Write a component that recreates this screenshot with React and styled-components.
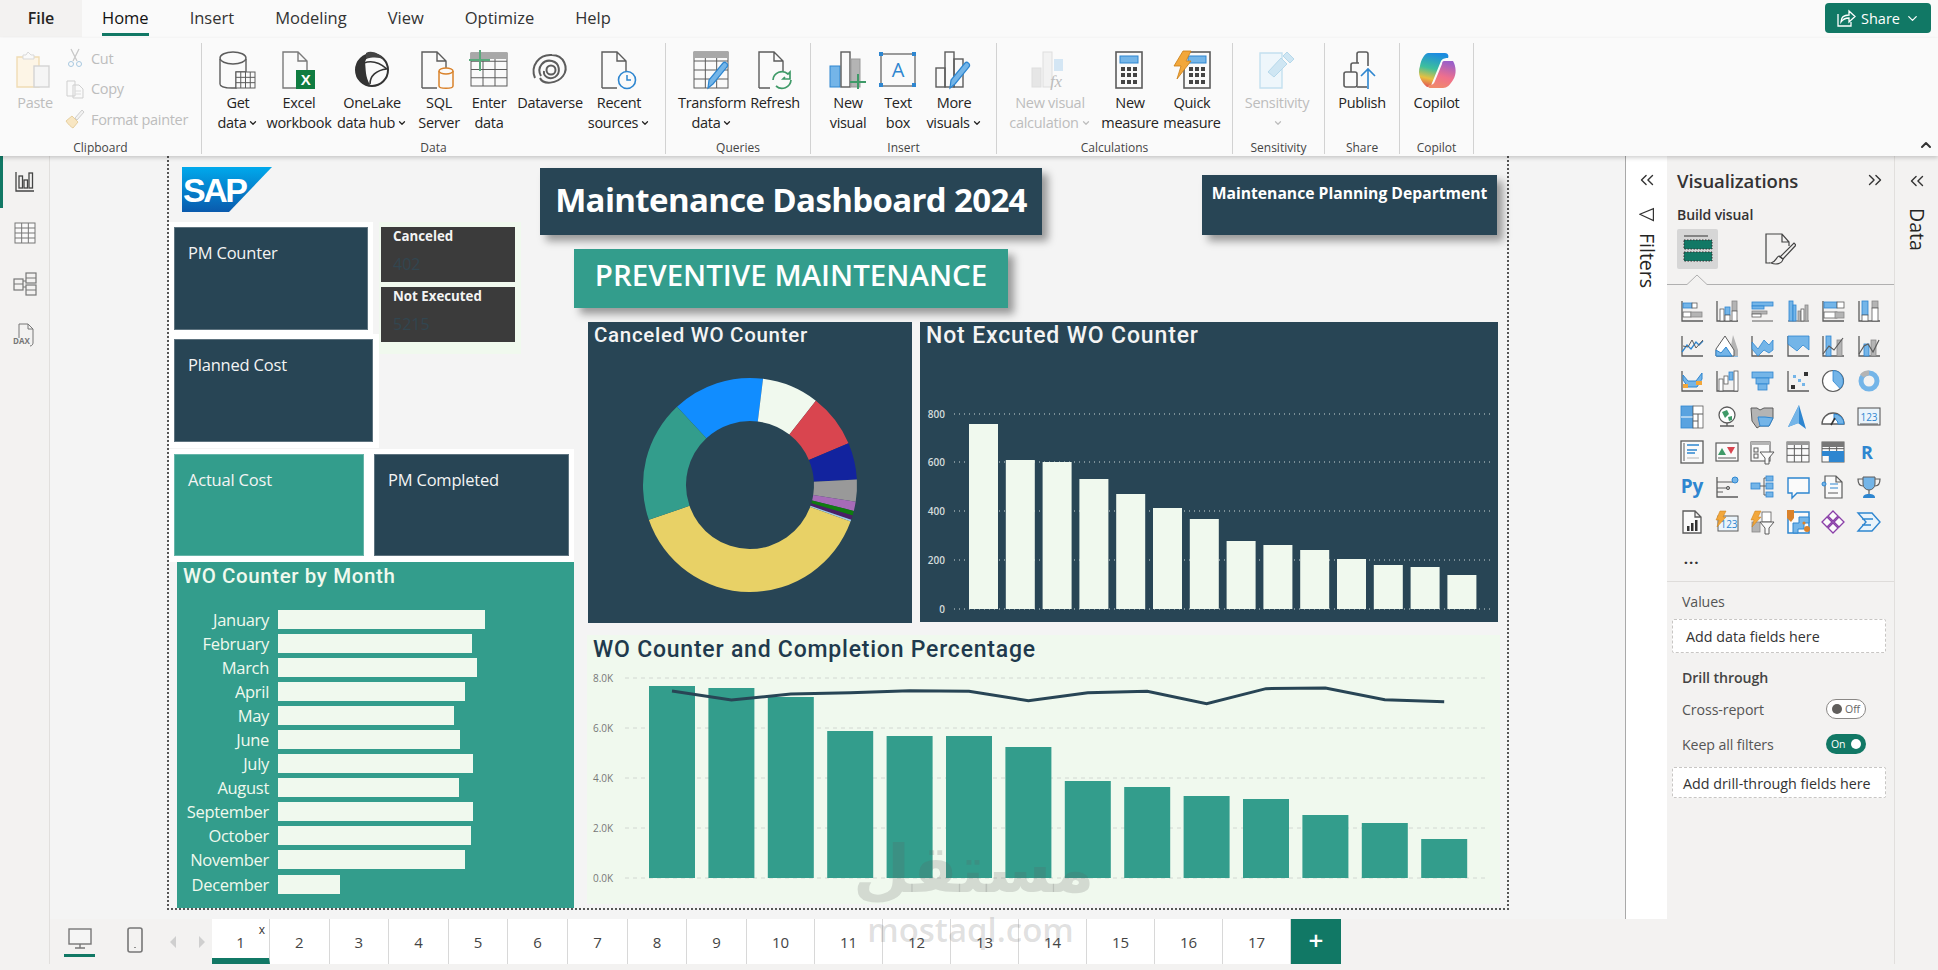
import React from 'react';
import styled, { createGlobalStyle } from 'styled-components';
import { ChevronDown, ChevronUp, ChevronsLeft, ChevronsRight } from 'lucide-react';

const DARK = '#284555';
const TEAL = '#339d8c';
const MINT = '#f0f9ee';
const GREEN = '#117865';
const PANE = '#f3f2f1';

const GlobalStyle = createGlobalStyle`
  html, body { margin: 0; padding: 0; background: ${PANE}; }
  body { font-family: "Open Sans", "Liberation Sans", sans-serif; color: #252423; }
`;

/* ---------- ribbon icons ---------- */
const Ico = styled.svg.attrs({ viewBox: '0 0 40 40', fill: 'none' })`
  width: 40px;
  height: 40px;
  display: block;
`;
const Mini = styled.svg.attrs({ viewBox: '0 0 20 20', fill: 'none' })`
  width: 20px;
  height: 20px;
  display: block;
  flex: none;
`;
const Gal = styled.svg.attrs({ viewBox: '0 0 24 24', fill: 'none' })`
  width: 24px;
  height: 24px;
  display: block;
  overflow: visible;
`;
const ink = '#5c5c5c';
const blue = '#2e86d0';
const sky = '#74b5e8';
const grey = '#b4b4b4';

const Grid = ({ x, y, w, h, cols = 3, rows = 3, s = ink }) => (
  <g stroke={s} strokeWidth="1">
    <rect x={x} y={y} width={w} height={h} fill="#fafafa" />
    {Array.from({ length: cols - 1 }, (_, i) => (
      <line key={i} x1={x + ((i + 1) * w) / cols} x2={x + ((i + 1) * w) / cols} y1={y} y2={y + h} />
    ))}
    {Array.from({ length: rows - 1 }, (_, i) => (
      <line key={i} y1={y + ((i + 1) * h) / rows} y2={y + ((i + 1) * h) / rows} x1={x} x2={x + w} />
    ))}
  </g>
);
const Pencil = () => (
  <path d="M16 38l1-8L31 13c2-2 6 1 4 4L21 34z" fill={sky} stroke={blue} strokeWidth="1.2" />
);

const PasteIcon = () => (
  <Ico>
    <path d="M2 7h22v30H2z" fill="#fdf5e6" stroke="#f0dcb4" strokeWidth="1.4" />
    <path d="M8 9V5h3l2-3 3 3h3v4z" fill="#fafafa" stroke="#d9d9d9" />
    <rect x="19" y="16" width="15" height="21" fill="#f5f5f5" stroke="#d4d4d4" strokeWidth="1.4" />
  </Ico>
);
const CutIcon = () => (
  <Mini>
    <path d="M6 1l6 12M14 1L8 13" stroke="#c8c8c8" strokeWidth="1.3" />
    <circle cx="6" cy="16" r="2.5" stroke="#a8c8e0" />
    <circle cx="14" cy="16" r="2.5" stroke="#a8c8e0" />
  </Mini>
);
const CopyIcon = () => (
  <Mini>
    <path d="M2 2h8v15H2z M8 6h6l4 4v9H8z" stroke="#cfcfcf" fill="#fafafa" />
    <path d="M10 12h6M10 15h6" stroke="#dcdcdc" />
  </Mini>
);
const PainterIcon = () => (
  <Mini>
    <path d="M1 12l6-5 6 6-5 6c-2-1-5-4-7-7z" fill="#f8e6c2" stroke="#e6cf9f" />
    <path d="M10 9l7-8 2 2-7 8z" fill="#f2f2f2" stroke="#cfcfcf" />
  </Mini>
);
const GetDataIcon = () => (
  <Ico>
    <path d="M2 9v25c0 3 7 4 12 4h4V22h10V9" stroke={ink} strokeWidth="1.4" />
    <ellipse cx="15" cy="8" rx="13" ry="6" stroke={ink} strokeWidth="1.4" fill="#fafafa" />
    <Grid x={18} y={22} w={19} h={16} cols={4} rows={3} />
  </Ico>
);
const ExcelIcon = () => (
  <Ico>
    <path d="M4 38V2h15l9 9v27z M19 2v9h9" stroke="#7a7a7a" strokeWidth="1.4" fill="#fafafa" />
    <rect x="17" y="20" width="19" height="19" fill="#107c41" />
    <text x="26.5" y="35" fontSize="15" fontWeight="700" fill="#fff" textAnchor="middle" fontFamily="Liberation Sans, sans-serif">X</text>
  </Ico>
);
const OneLakeIcon = () => (
  <Ico>
    <circle cx="20" cy="20" r="16" fill="#fafafa" stroke="#333" strokeWidth="2" />
    <path d="M5 26C2 14 10 4 20 3c-3 3-6 5-7 9 1 8 0 14 5 23-6 0-11-3-13-9z" fill="#333" />
    <path d="M12 13c8-3 16 0 23 6M18 34c0-8 6-14 17-15" stroke="#333" strokeWidth="1.6" />
    <path d="M14 3c5-3 14 0 18 7-5-3-11-3-18-1z" fill="#444" />
  </Ico>
);
const SqlIcon = () => (
  <Ico>
    <path d="M3 38V2h15l9 9v16 M18 2v9h9 M3 38h15" stroke={ink} strokeWidth="1.4" fill="#fafafa" />
    <path d="M20 21v15c0 3 14 3 14 0V21" fill="#fafafa" stroke="#d9822b" strokeWidth="1.5" />
    <ellipse cx="27" cy="21" rx="7" ry="3" fill="#fafafa" stroke="#d9822b" strokeWidth="1.5" />
  </Ico>
);
const EnterIcon = () => (
  <Ico>
    <Grid x={2} y={3} w={36} h={33} cols={3} rows={4} />
    <rect x="2" y="3" width="36" height="6" fill="#a8a8a8" />
    <path d="M11 0v21M0 10h21" stroke="#5aa97c" strokeWidth="2" />
  </Ico>
);
const DataverseIcon = () => (
  <Ico>
    <path d="M5 28C0 16 9 4 22 5c12 0 17 13 11 21-6 8-20 9-23 2" stroke={ink} strokeWidth="2" />
    <path d="M11 26C6 17 14 9 22 11c8 2 9 12 3 16-5 3-12 0-11-6" stroke={ink} strokeWidth="2" />
    <circle cx="21" cy="20" r="4.5" stroke={ink} strokeWidth="2" />
  </Ico>
);
const RecentIcon = () => (
  <Ico>
    <path d="M3 38V2h15l9 9v13 M18 2v9h9 M3 38h15" stroke={ink} strokeWidth="1.4" />
    <circle cx="28" cy="30" r="8.5" stroke={blue} strokeWidth="1.6" fill="#fafafa" />
    <path d="M28 25v5h4" stroke={blue} strokeWidth="1.5" />
  </Ico>
);
const TransformIcon = () => (
  <Ico>
    <Grid x={2} y={2} w={34} h={36} cols={3} rows={4} />
    <rect x="2" y="2" width="34" height="6" fill="#a8a8a8" />
    <Pencil />
  </Ico>
);
const RefreshIcon = () => (
  <Ico>
    <path d="M4 38V2h15l9 9v10 M19 2v9h9 M4 38h11" stroke={ink} strokeWidth="1.4" />
    <path d="M18 30a9 9 0 0 1 15-6l2-2v7h-7l2-2M36 30a9 9 0 0 1-15 6" stroke="#3f9a68" strokeWidth="1.7" />
  </Ico>
);
const NewVisualIcon = () => (
  <Ico>
    <rect x="2" y="16" width="10" height="21" fill={sky} stroke={blue} />
    <rect x="13" y="2" width="9" height="35" fill="#fafafa" stroke={ink} strokeWidth="1.4" />
    <rect x="23" y="9" width="9" height="28" fill={grey} stroke="#999" />
    <path d="M30 24v15M22 32h16" stroke="#3f9a68" strokeWidth="2" />
  </Ico>
);
const TextBoxIcon = () => (
  <Ico>
    <rect x="3" y="4" width="34" height="32" fill="#fafafa" stroke={ink} strokeWidth="1.2" />
    {[[1, 2], [34, 2], [1, 33], [34, 33]].map(([x, y]) => (
      <rect key={x + '' + y} x={x} y={y} width="4" height="4" fill={blue} />
    ))}
    <text x="20" y="27" fontSize="20" fill={blue} textAnchor="middle" fontFamily="Open Sans, sans-serif">A</text>
  </Ico>
);
const MoreVisualsIcon = () => (
  <Ico>
    <rect x="2" y="18" width="9" height="19" stroke={ink} strokeWidth="1.4" />
    <rect x="11" y="2" width="9" height="35" stroke={ink} strokeWidth="1.4" />
    <rect x="20" y="9" width="9" height="28" stroke={ink} strokeWidth="1.4" />
    <Pencil />
  </Ico>
);
const VisualCalcIcon = () => (
  <Ico>
    <rect x="2" y="18" width="9" height="19" fill="#e6e6e6" stroke="#dedede" />
    <rect x="13" y="2" width="9" height="35" fill="#f2f2f2" stroke="#dedede" />
    <rect x="24" y="9" width="9" height="12" fill="#d4e6f4" />
    <text x="20" y="37" fontSize="17" fontStyle="italic" fill="#bdbdbd" fontFamily="Liberation Serif, serif">fx</text>
  </Ico>
);
const Calc = ({ x = 0 }) => (
  <g transform={`translate(${x} 0)`}>
    <rect x="6" y="2" width="26" height="36" fill="#fafafa" stroke={ink} strokeWidth="1.6" />
    <rect x="10" y="6" width="18" height="7" fill={sky} stroke={blue} />
    {[17, 23, 30].map(y => [11, 17, 23].map(cx => (
      <rect key={y + '-' + cx} x={cx} y={y} width="4" height="4" fill="#444" />
    )))}
  </g>
);
const MeasureIcon = () => <Ico><Calc /></Ico>;
const QuickIcon = () => (
  <Ico>
    <Calc x={6} />
    <path d="M11 1h8l-5 10h5L5 29l4-13H2z" fill="#f2a73b" stroke="#c97c14" strokeWidth=".8" />
  </Ico>
);
const SensitivityIcon = () => (
  <Ico>
    <path d="M3 3h22v35H3z" fill="#eef6fb" stroke="#c4e0ef" strokeWidth="1.4" />
    <path d="M11 22L24 8l6 6-13 13z" fill="#cfe6f3" stroke="#b6d8ea" />
    <path d="M26 6l4-4 7 7-4 4z" fill="#cfe6f3" stroke="#b6d8ea" />
  </Ico>
);
const PublishIcon = () => (
  <Ico>
    <rect x="2" y="22" width="13" height="15" rx="2" stroke={ink} strokeWidth="1.6" />
    <path d="M9 22v-7a2 2 0 0 1 2-2h6" stroke={ink} strokeWidth="1.6" />
    <path d="M15 13V4a2 2 0 0 1 2-2h7a2 2 0 0 1 2 2v12" stroke={ink} strokeWidth="1.6" />
    <path d="M15 37h10" stroke={ink} strokeWidth="1.6" />
    <path d="M26 39V19M19 26l7-7 7 7" stroke={blue} strokeWidth="1.6" />
  </Ico>
);
const CopilotIcon = () => (
  <Ico>
    <defs>
      <linearGradient id="cpA" x1="0.5" y1="0" x2="0.3" y2="1">
        <stop offset="0" stopColor="#1b8be0" />
        <stop offset=".45" stopColor="#3ebf9c" />
        <stop offset=".75" stopColor="#e8c040" />
        <stop offset="1" stopColor="#e25555" />
      </linearGradient>
      <linearGradient id="cpB" x1="0.6" y1="0" x2="0.3" y2="1">
        <stop offset="0" stopColor="#9a5fc8" />
        <stop offset=".55" stopColor="#f0708c" />
        <stop offset="1" stopColor="#f08a6a" />
      </linearGradient>
    </defs>
    <path d="M11 3h17c3 0 4 3 3 5-2 0-5 0-7 3L15 33c-1 3-2 4-5 4C4 32 0 24 3 16 4 10 7 4 11 3z" fill="url(#cpA)" />
    <path d="M27 11h9c3 5 4 13 0 19-3 5-6 8-10 8H13c-2 0-2-2-1-3 3 0 5-1 6-4l7-17c0-2 1-3 2-3z" fill="url(#cpB)" />
  </Ico>
);

/* ---------- gallery icons, one per cell ---------- */
const base = <path d="M2 2v20h21" stroke={ink} strokeWidth="1.3" />;
const F = ({ x, y, w, h, c = sky, s = blue }) => <rect x={x} y={y} width={w} height={h} fill={c} stroke={s} strokeWidth=".8" />;
const G = props => <F c={grey} s="#888" {...props} />;
const W = props => <F c="#fff" s={ink} {...props} />;
const T = ({ x = 12, y = 17, size = 11, c = blue, children, weight = 400 }) => (
  <text x={x} y={y} fontSize={size} fill={c} fontWeight={weight} textAnchor="middle" fontFamily="Open Sans, sans-serif">{children}</text>
);
const Bolt = () => <path d="M5 1h6L8 7h3L2 17l2-7H1z" fill="#f2a73b" stroke="#c97c14" strokeWidth=".5" />;

const galleryIcons = [
  <>{base}<F x={3} y={4} w={9} h={5} /><W x={12} y={4} w={5} h={5} /><W x={3} y={13} w={8} h={5} /><G x={11} y={13} w={11} h={5} /></>,
  <>{base}<W x={5} y={10} w={4} h={12} /><F x={10} y={8} w={5} h={8} /><W x={10} y={16} w={5} h={6} /><G x={17} y={2} w={5} h={10} /><W x={17} y={12} w={5} h={10} /></>,
  <><path d="M2 22h21" stroke={ink} /><F x={2} y={3} w={21} h={4} /><F x={2} y={7} w={12} h={3} /><G x={2} y={12} w={15} h={3} /><W x={2} y={15} w={9} h={3} /></>,
  <><path d="M2 22h21" stroke={ink} /><F x={3} y={2} w={4} h={20} /><F x={7} y={6} w={3} h={16} /><G x={12} y={12} w={3} h={10} /><W x={15} y={10} w={3} h={12} /><G x={19} y={6} w={3} h={16} /></>,
  <>{base}<F x={3} y={3} w={13} h={6} /><W x={16} y={3} w={7} h={6} /><W x={3} y={13} w={13} h={6} /><G x={14} y={13} w={9} h={6} /></>,
  <>{base}<F x={5} y={2} w={6} h={14} /><W x={5} y={16} w={6} h={6} /><G x={15} y={2} w={6} h={7} /><W x={15} y={9} w={6} h={13} /></>,
  <>{base}<path d="M2 18l5-7 4 4 5-7 3 3 4-4" stroke={blue} strokeWidth="1.3" /><path d="M3 12l5 1 4-7 4 8 7-8" stroke={ink} /></>,
  <><path d="M2 22h21" stroke={blue} /><path d="M14 22L18 1l5 15v6z" fill={grey} /><path d="M1 22V15L10 2l9 14v6z" fill="#fff" stroke={ink} /><path d="M1 22v-6l5 3 5-6 6 9z" fill={sky} stroke={blue} /></>,
  <>{base}<path d="M2 8l6 7 6-9 5 5 4-5v10l-4 3-5-3-6 6-6-7z" fill={sky} stroke={blue} strokeWidth=".8" /></>,
  <>{base}<path d="M2 2h21v14l-6-5-6 6-9-7z" fill={sky} stroke={blue} strokeWidth=".8" /></>,
  <>{base}<F x={5} y={2} w={5} h={20} /><G x={16} y={6} w={5} h={16} /><path d="M2 20l6-8 5 4 9-12" stroke={ink} strokeWidth="1.2" /></>,
  <>{base}<F x={7} y={10} w={5} h={12} /><G x={14} y={6} w={5} h={16} /><path d="M2 20l5-8 4-2 5 8 6-12" stroke={ink} strokeWidth="1.2" /></>,
  <>{base}<path d="M3 6l5 6h8l6-8v6l-5 8H8l-5-7z" fill={sky} stroke={blue} /><rect x="3" y="15" width="5" height="4" fill="#f2a73b" /><rect x="16" y="12" width="6" height="4" fill="#f2a73b" /></>,
  <>{base}<W x={4} y={10} w={4} h={12} /><W x={9} y={7} w={4} h={8} /><F x={14} y={3} w={4} h={8} /><W x={19} y={2} w={4} h={20} /></>,
  <><F x={2} y={3} w={21} h={6} /><F x={6} y={9} w={13} h={6} /><F x={8} y={15} w={9} h={6} /></>,
  <>{base}<rect x="5" y="16" width="4" height="4" fill="#333" /><rect x="18" y="3" width="4" height="4" fill="#333" /><rect x="7" y="6" width="3" height="3" fill={sky} /><rect x="12" y="10" width="3" height="3" fill={sky} /><rect x="16" y="14" width="3" height="3" fill={sky} /></>,
  <><circle cx="12" cy="12" r="10.5" fill="#fff" stroke={ink} strokeWidth="1.2" /><path d="M12 12V1.5a10.5 10.5 0 0 1 7 18z" fill={sky} stroke={blue} strokeWidth=".8" /></>,
  <><circle cx="12" cy="12" r="8" stroke={sky} strokeWidth="5" /><path d="M5 7a8 8 0 0 1 7-3" stroke={grey} strokeWidth="5" /></>,
  <><F x={1} y={1} w={12} h={22} c="#5aa3e0" /><path d="M1 12h12" stroke="#fff" /><W x={13} y={1} w={10} h={22} /><path d="M13 9h10M18 9v14M13 16h5" stroke={ink} /></>,
  <><circle cx="12" cy="10" r="8" fill="#fff" stroke={ink} strokeWidth="1.3" /><path d="M7 7l5-2 2 4-4 4zM13 12l4-1 0 4-3 1z" fill="#3f9a68" /><path d="M5 21h14M12 18v3" stroke={ink} strokeWidth="1.3" /></>,
  <><path d="M1 3h6l3 2 4-2h9v10l-4 8H10l-3 2-5-7z" fill={grey} stroke={ink} /><path d="M8 12h7l8 1-4 8H10z" fill={sky} stroke={blue} /></>,
  <><path d="M13 0l7 24-8-6-10 4z" fill={blue} /><path d="M13 0v18l-11 4z" fill={sky} /></>,
  <><path d="M1 19a11 11 0 0 1 22 0z" fill="#fff" stroke={ink} strokeWidth="1.3" /><path d="M13 9a10 10 0 0 1 10 10h-6a5 5 0 0 0-4-5z" fill={sky} stroke={blue} /><path d="M10 20l4-7" stroke="#333" strokeWidth="1.6" /></>,
  <><rect x="1" y="3" width="22" height="17" fill="#eaf4fb" stroke={ink} strokeWidth="1.1" /><T size={10} y={16}>123</T><path d="M3 19h18" stroke={ink} /></>,
  <><rect x="1" y="1" width="22" height="22" fill="#fafafa" stroke={ink} strokeWidth="1.3" /><path d="M4 3v18" stroke={ink} /><path d="M7 5h12M7 10h10M7 13h8" stroke={blue} strokeWidth="1.7" /><path d="M7 18h12" stroke={grey} /></>,
  <><rect x="1" y="3" width="22" height="18" fill="#fafafa" stroke={ink} strokeWidth="1.2" /><path d="M7 8l4 7H3z" fill="#3f9a68" /><path d="M12 7h8l-4 7z" fill="#d9444f" /><path d="M3 18h18" stroke={ink} /></>,
  <><rect x="1" y="2" width="19" height="19" fill="#fafafa" stroke={ink} strokeWidth="1.1" /><rect x="1" y="2" width="19" height="3" fill={grey} /><rect x="4" y="8" width="4" height="4" stroke={ink} /><rect x="4" y="14" width="4" height="4" stroke={ink} /><path d="M10 12h14l-5 6v6h-4v-6z" fill="#fafafa" stroke={ink} /></>,
  <><Grid x={1} y={2} w={22} h={20} cols={3} rows={3} /><rect x="1" y="2" width="22" height="3" fill="#999" /></>,
  <><Grid x={1} y={2} w={22} h={20} cols={3} rows={3} /><rect x="1" y="2" width="22" height="5" fill="#777" /><rect x="1" y="11" width="22" height="5" fill={blue} /><rect x="8" y="16" width="15" height="6" fill={blue} /></>,
  <T size={18} y={19} weight={700} x={10} c={blue}>R</T>,
  <T size={19} y={18} weight={700} c={blue}>Py</T>,
  <>{base}<path d="M2 7h16M2 13h10M2 17h6" stroke={ink} /><circle cx="20" cy="5" r="3" fill={sky} stroke={blue} /><circle cx="13" cy="13" r="1.6" fill={grey} stroke={ink} /></>,
  <><F x={1} y={8} w={9} h={6} /><path d="M10 11h4M14 3v17M14 3h2M14 11h2M14 20h2" stroke={ink} /><F x={16} y={1} w={7} h={5} /><F x={16} y={8} w={7} h={6} /><F x={16} y={17} w={7} h={5} /></>,
  <path d="M2 3h21v15H11l-5 5v-5H2z" fill="#fafafa" stroke={blue} strokeWidth="1.4" />,
  <><path d="M4 23V1h11l6 6v16z M15 1v6h6" fill="#fafafa" stroke={ink} strokeWidth="1.2" /><circle cx="3" cy="9" r="2" fill={sky} stroke={blue} /><path d="M9 9h8M9 13h8" stroke={blue} /><path d="M7 18h10" stroke={ink} /></>,
  <><path d="M6 2h12v7a6 6 0 0 1-12 0z" fill={sky} stroke={ink} /><path d="M6 4H1c0 5 2 7 5 7M18 4h5c0 5-2 7-5 7M12 15v4" stroke={ink} strokeWidth="1.2" /><path d="M6 23c0-3 2-4 6-4s6 1 6 4z" fill={blue} /></>,
  <><path d="M3 23V1h12l6 6v16z M15 1v6h6" fill="#fafafa" stroke={ink} strokeWidth="1.3" /><rect x="7" y="16" width="2.5" height="5" fill="#333" /><rect x="11" y="13" width="2.5" height="8" fill="#333" /><rect x="15" y="10" width="2.5" height="11" fill="#333" /></>,
  <><rect x="3" y="6" width="20" height="15" fill="#eaf4fb" stroke={ink} /><T x={14} y={18} size={10}>123</T><Bolt /></>,
  <><G x={2} y={12} w={8} h={10} /><W x={12} y={2} w={9} h={10} /><path d="M10 12h14l-5 6v6h-4v-6z" fill="#fafafa" stroke={ink} /><Bolt /></>,
  <><path d="M2 2h21v21H2z" fill="#fafafa" stroke={blue} strokeWidth="1.5" /><path d="M7 23V13h6V7h10v6h-5v6h-6v4z" fill={sky} stroke={blue} /><path d="M1 0h7v8l-3 4-4-4z" fill="#d9822b" /><circle cx="21" cy="19" r="3" fill="#d9822b" /><circle cx="18" cy="13" r="1.6" fill="#d9822b" /></>,
  <path d="M12 1l5 5-5 5-5-5zM6 7l5 5-5 5-5-5zM18 7l5 5-5 5-5-5zM12 13l5 5-5 5-5-5z" stroke="#8a3fa8" strokeWidth="1.3" fill="#fafafa" />,
  <path d="M1 3h14l8 9-8 9H1l8-9zM5 9h11M5 15h9" stroke={blue} strokeWidth="1.4" fill="#eaf4fb" />,
];

/* ---------- shell ---------- */
const Page = styled.div`
  position: relative;
  width: 1938px;
  height: 970px;
  overflow: hidden;
  background: ${PANE};
`;
const TopBar = styled.div`
  position: relative;
  height: 38px;
  background: #fafafa;
  display: flex;
  align-items: flex-start;
`;
const FileTab = styled.div`
  width: 82px;
  height: 37px;
  background: ${PANE};
  font-size: 16px;
  font-weight: 600;
  line-height: 36px;
  text-align: center;
`;
const Tabs = styled.div`
  display: flex;
  gap: 41px;
  margin-left: 20px;
`;
const Tab = styled.div`
  height: 33px;
  line-height: 36px;
  font-size: 16.5px;
  color: ${p => (p.$active ? '#111' : '#333')};
  border-bottom: ${p => (p.$active ? `3px solid ${GREEN}` : '3px solid transparent')};
`;
const ShareBtn = styled.div`
  position: absolute;
  left: 1825px;
  top: 3px;
  width: 106px;
  height: 30px;
  border-radius: 4px;
  background: ${GREEN};
  color: #fff;
  font-size: 14.5px;
  display: flex;
  align-items: center;
  justify-content: center;
  gap: 5px;
`;
const RibbonBar = styled.div`
  position: relative;
  z-index: 5;
  height: 118px;
  padding-top: 5px;
  box-sizing: border-box;
  background: #fafafa;
  box-shadow: 0 2px 4px rgba(0, 0, 0, 0.18);
  display: flex;
`;
const Group = styled.div`
  width: ${p => p.$w}px;
  height: 111px;
  box-sizing: border-box;
  border-right: 1px solid #d2d2d2;
  display: flex;
  flex-direction: column;
  flex: none;
`;
const GroupBody = styled.div`
  height: 93px;
  flex: none;
  display: flex;
  padding-left: ${p => p.$pad || 0}px;
`;
const GroupLabel = styled.div`
  line-height: 24px;
  font-size: 12px;
  color: #444;
  text-align: center;
`;
const RibbonBtn = styled.div`
  width: ${p => p.$w}px;
  flex: none;
  padding-top: 7px;
  display: flex;
  flex-direction: column;
  align-items: center;
  font-size: 14.5px;
  line-height: 20px;
  letter-spacing: -0.3px;
  color: ${p => (p.$off ? '#bdbdbd' : '#252423')};
  white-space: nowrap;
  text-align: center;
`;
const BtnText = styled.div`
  margin-top: 3px;
`;
const SmallCol = styled.div`
  display: flex;
  flex-direction: column;
  margin-left: 2px;
`;
const SmallBtn = styled.div`
  height: 30.5px;
  display: flex;
  align-items: center;
  gap: 6px;
  font-size: 14.5px;
  letter-spacing: -0.3px;
  color: #bdbdbd;
  white-space: nowrap;
`;
const Collapse = styled.div`
  position: absolute;
  left: 1918px;
  top: 98px;
  color: #333;
`;
const Workspace = styled.div`
  display: flex;
  height: 808px;
`;
const LeftNav = styled.div`
  position: relative;
  width: 50px;
  flex: none;
  box-sizing: border-box;
  border-right: 1px solid #e1dfdd;
  display: flex;
  flex-direction: column;
  align-items: center;
  padding-top: 14px;
  gap: 27px;
  &::before {
    content: '';
    position: absolute;
    left: 0;
    top: 0;
    width: 3px;
    height: 52px;
    background: ${GREEN};
  }
`;
const Center = styled.div`
  width: 1617px;
  flex: none;
  display: flex;
  flex-direction: column;
`;
const UpperRow = styled.div`
  flex: 1;
  display: flex;
  min-height: 0;
`;
const CanvasArea = styled.div`
  flex: 1;
  background: #f4f4f4;
  padding-left: 117px;
`;
const Canvas = styled.div`
  position: relative;
  width: 1342px;
  height: 754px;
  box-sizing: border-box;
  border: 2px dotted #555;
  border-top: 0;
  background: #f4f4f4;
`;
const FilterStrip = styled.div`
  width: 42px;
  flex: none;
  box-sizing: border-box;
  background: #fff;
  border-left: 1px solid #a9a9a9;
  display: flex;
  flex-direction: column;
  align-items: center;
  padding-top: 13px;
  color: #333;
`;
const VerticalText = styled.div`
  writing-mode: vertical-rl;
  font-size: 19.5px;
  line-height: 24px;
  font-weight: 500;
  margin-top: ${p => p.$top}px;
  color: #252423;
`;

/* ---------- canvas visuals, placed freely like on a report page ---------- */
const Visual = styled.div`
  position: absolute;
  left: ${p => p.$x - 169}px;
  top: ${p => p.$y - 156}px;
  width: ${p => p.$w}px;
  height: ${p => p.$h}px;
  box-sizing: border-box;
  background: ${p => p.$bg || DARK};
  color: ${p => p.$color || '#f4f4f4'};
  box-shadow: ${p => (p.$shadow ? '6px 6px 8px rgba(0,0,0,0.38)' : 'none')};
`;
const CardLabel = styled.div`
  font-size: 16.5px;
  line-height: 20px;
  padding: 15px 0 0 13px;
  letter-spacing: -0.2px;
  border: 1px solid rgba(255, 255, 255, 0.25);
  height: 100%;
  box-sizing: border-box;
`;
const MiniTitle = styled.div`
  font-size: 13.3px;
  font-weight: 700;
  line-height: 16px;
  padding: 1px 0 0 12px;
`;
const MiniValue = styled.div`
  font-size: 16px;
  line-height: 20px;
  padding: 10px 0 0 12px;
  color: #324650;
`;
const Headline = styled.div`
  height: 100%;
  display: flex;
  align-items: ${p => (p.$top ? 'flex-start' : 'center')};
  justify-content: center;
  color: #fff;
  font-weight: ${p => p.$weight || 700};
  font-size: ${p => p.$size}px;
  letter-spacing: ${p => p.$spacing || 0}px;
  padding-top: ${p => p.$top || 0}px;
  box-sizing: border-box;
  white-space: nowrap;
`;
const ChartTitle = styled.div`
  height: 30px;
  line-height: ${p => p.$line || 26}px;
  padding-left: ${p => p.$pad}px;
  font-family: Roboto, "Open Sans", sans-serif;
  font-size: ${p => p.$size || 20.5}px;
  font-weight: 500;
  letter-spacing: ${p => p.$spacing}px;
  white-space: nowrap;
`;
const ChartSvg = styled.svg`
  display: block;
  font-family: "Open Sans", sans-serif;
`;
const MonthList = styled.div`
  margin-top: 15px;
`;
const MonthRow = styled.div`
  height: 24.1px;
  display: flex;
  align-items: center;
`;
const MonthName = styled.div`
  width: 92px;
  text-align: right;
  font-size: 16.5px;
  letter-spacing: -0.3px;
  color: ${MINT};
  flex: none;
  white-space: nowrap;
`;
const MonthBar = styled.div`
  height: 19px;
  margin-left: 9px;
  background: ${MINT};
`;
const Watermark = styled.div`
  position: absolute;
  z-index: 8;
  left: 853px;
  top: 828px;
  width: 235px;
  text-align: center;
  color: rgba(95, 95, 95, 0.2);
  pointer-events: none;
`;
const WatermarkArabic = styled.div`
  font-family: "DejaVu Sans", sans-serif;
  font-weight: 700;
  font-size: 66px;
  line-height: 84px;
`;
const WatermarkLatin = styled.div`
  font-size: 33px;
  line-height: 36px;
  font-weight: 600;
`;

/* ---------- page tabs ---------- */
const TabsBar = styled.div`
  height: 45px;
  display: flex;
  background: ${PANE};
`;
const ViewIcons = styled.div`
  width: 162px;
  flex: none;
  display: flex;
  align-items: center;
  padding-left: 14px;
  box-sizing: border-box;
`;
const ViewSlot = styled.div`
  width: 31px;
  height: 30px;
  margin-left: ${p => p.$left || 0}px;
  display: flex;
  align-items: flex-start;
  justify-content: center;
  flex: none;
  box-sizing: border-box;
  border-bottom: ${p => (p.$active ? `3px solid ${GREEN}` : '3px solid transparent')};
`;
const NavArrows = styled.svg`
  margin-left: 20px;
  flex: none;
`;
const PageTab = styled.div`
  position: relative;
  width: ${p => p.$w}px;
  flex: none;
  box-sizing: border-box;
  background: #fff;
  border-right: 1px solid #d8d8d8;
  border-bottom: ${p => (p.$active ? `6px solid ${GREEN}` : '0')};
  font-size: 15px;
  line-height: 46px;
  text-align: center;
  color: #444;
`;
const CloseX = styled.span`
  position: absolute;
  right: 4px;
  top: 2px;
  font-size: 12px;
  line-height: 18px;
  color: #333;
`;
const AddTab = styled.div`
  width: 50px;
  flex: none;
  background: ${GREEN};
  color: #fff;
  font-size: 26px;
  font-weight: 600;
  line-height: 42px;
  text-align: center;
`;

/* ---------- right panes ---------- */
const VizPane = styled.div`
  width: 228px;
  flex: none;
  box-sizing: border-box;
  border-right: 1px solid #e1dfdd;
  background: ${PANE};
`;
const VizHeader = styled.div`
  height: 52px;
  box-sizing: border-box;
  padding: 0 8px 4px 10px;
  display: flex;
  align-items: center;
  justify-content: space-between;
  font-size: 18.5px;
  font-weight: 600;
  letter-spacing: -0.1px;
  color: #333;
`;
const BuildLabel = styled.div`
  padding-left: 10px;
  font-size: 14px;
  font-weight: 600;
  line-height: 14px;
  letter-spacing: -0.1px;
  color: #333;
`;
const BuildTabs = styled.div`
  display: flex;
  margin: 7px 0 0 10px;
`;
const BuildTab = styled.div`
  width: 41px;
  height: 40px;
  border-radius: 2px;
  margin-right: ${p => p.$gap || 0}px;
  background: ${p => (p.$active ? '#d6d6d6' : 'transparent')};
  display: flex;
  align-items: center;
  justify-content: center;
`;
const Notch = styled.svg`
  display: block;
  margin-top: 1px;
`;
const Gallery = styled.div`
  display: grid;
  grid-template-columns: repeat(6, 35.4px);
  grid-auto-rows: 35.3px;
  padding: 8px 0 0 7px;
  place-items: center;
`;
const More = styled.div`
  font-size: 15px;
  font-weight: 700;
  letter-spacing: 1px;
  line-height: 8px;
  color: #333;
`;
const Divider = styled.div`
  margin-top: 6px;
  border-top: 1px solid #dedcda;
`;
const FieldLabel = styled.div`
  padding-left: 15px;
  margin-top: ${p => p.$top}px;
  font-size: 14.2px;
  line-height: 18px;
  font-weight: ${p => p.$weight || 400};
  letter-spacing: -0.1px;
  color: ${p => p.$color || '#555'};
`;
const DropBox = styled.div`
  margin: ${p => p.$top}px 0 0 5px;
  width: 214px;
  height: ${p => p.$h}px;
  box-sizing: border-box;
  border: 1px dashed #c8c6c4;
  border-radius: 2px;
  background: #fff;
  padding-left: ${p => p.$pad}px;
  font-size: 14.3px;
  line-height: ${p => p.$h}px;
  color: #333;
  white-space: nowrap;
`;
const ToggleRow = styled.div`
  height: 24px;
  margin-top: ${p => p.$top}px;
  padding-left: 15px;
  display: flex;
  align-items: center;
  justify-content: space-between;
  padding-right: 28px;
  font-size: 14.2px;
  letter-spacing: -0.1px;
  color: #555;
`;
const Toggle = styled.div`
  width: 40px;
  height: 20px;
  box-sizing: border-box;
  border-radius: 10px;
  border: ${p => (p.$on ? '0' : '1px solid #8a8886')};
  background: ${p => (p.$on ? GREEN : '#fff')};
  color: ${p => (p.$on ? '#fff' : '#666')};
  font-size: 10.5px;
  display: flex;
  align-items: center;
  justify-content: space-between;
  flex-direction: ${p => (p.$on ? 'row' : 'row-reverse')};
  padding: 0 5px;
  &::after {
    content: '';
    width: 10px;
    height: 10px;
    border-radius: 50%;
    background: ${p => (p.$on ? '#fff' : '#605e5c')};
  }
`;
const DataStrip = styled.div`
  flex: 1;
  background: ${PANE};
  display: flex;
  flex-direction: column;
  align-items: center;
  padding-top: 14px;
  color: #333;
`;

/* ---------- data ---------- */
const months = [
  ['January', 207], ['February', 194], ['March', 199], ['April', 187], ['May', 176], ['June', 182],
  ['July', 195], ['August', 181], ['September', 195], ['October', 193], ['November', 187], ['December', 62],
];
const notExecuted = [185, 149, 147, 130, 115, 101, 90, 68, 64, 59, 50, 44, 42, 34];
const completed = [192, 190, 181, 147, 142, 142, 131, 97, 91, 82, 79, 63, 55, 39];
const percentLine = [183, 210, 192, 188, 182, 184, 212, 188, 184, 221, 176, 174, 209, 215];
const donut = [
  [317, 367, '#118dff'], [7, 38, MINT], [38, 67, '#d9454f'], [67, 87, '#12239e'], [87, 99, '#999999'],
  [99, 104, '#a66bb8'], [104, 106.6, '#107c10'], [106.6, 109, '#4a1f66'], [109, 110, '#a0cbe8'],
  [110, 251, '#e8d166'], [251, 317, TEAL],
];
const tabNumbers = [[2, 59.5], [3, 59.5], [4, 60], [5, 59], [6, 60], [7, 60], [8, 59], [9, 60], [10, 68], [11, 68], [12, 68], [13, 68], [14, 68], [15, 68], [16, 68], [17, 68]];

const arcPath = (a0, a1, cx, cy, R, r) => {
  const pt = (a, rad) => {
    const t = (a * Math.PI) / 180;
    return `${(cx + rad * Math.sin(t)).toFixed(2)} ${(cy - rad * Math.cos(t)).toFixed(2)}`;
  };
  const large = a1 - a0 > 180 ? 1 : 0;
  return `M${pt(a0, R)}A${R} ${R} 0 ${large} 1 ${pt(a1, R)}L${pt(a1, r)}A${r} ${r} 0 ${large} 0 ${pt(a0, r)}Z`;
};

const RibbonButton = ({ w, off, icon, lines, chevron }) => (
  <RibbonBtn $w={w} $off={off}>
    {icon}
    <BtnText>
      {lines.map((l, i) => (
        <div key={l}>
          {l}
          {chevron && i === lines.length - 1 && <ChevronDown size={10} strokeWidth={3} style={{ marginLeft: 2 }} />}
        </div>
      ))}
    </BtnText>
  </RibbonBtn>
);

const App = () => {
  return (
    <Page>
      <GlobalStyle />
      <TopBar>
        <FileTab>File</FileTab>
        <Tabs>
          <Tab $active>Home</Tab>
          <Tab>Insert</Tab>
          <Tab>Modeling</Tab>
          <Tab>View</Tab>
          <Tab>Optimize</Tab>
          <Tab>Help</Tab>
        </Tabs>
        <ShareBtn>
          <svg width="20" height="20" viewBox="0 0 20 20" fill="none" stroke="#fff" strokeWidth="1.3">
            <path d="M2 6v12h13v-4" />
            <path d="M5 14c0-5 3-7 8-7V3l6 5.5-6 5.5V10c-4 0-6 1-8 4z" />
          </svg>
          Share
          <ChevronDown size={15} />
        </ShareBtn>
      </TopBar>

      <RibbonBar>
        <Group $w={202}>
          <GroupBody $pad={7}>
            <RibbonButton w={56} off icon={<PasteIcon />} lines={['Paste']} />
            <SmallCol>
              <SmallBtn><CutIcon />Cut</SmallBtn>
              <SmallBtn><CopyIcon />Copy</SmallBtn>
              <SmallBtn><PainterIcon />Format painter</SmallBtn>
            </SmallCol>
          </GroupBody>
          <GroupLabel>Clipboard</GroupLabel>
        </Group>
        <Group $w={464}>
          <GroupBody $pad={8}>
            <RibbonButton w={56} icon={<GetDataIcon />} lines={['Get', 'data']} chevron />
            <RibbonButton w={66} icon={<ExcelIcon />} lines={['Excel', 'workbook']} />
            <RibbonButton w={80} icon={<OneLakeIcon />} lines={['OneLake', 'data hub']} chevron />
            <RibbonButton w={54} icon={<SqlIcon />} lines={['SQL', 'Server']} />
            <RibbonButton w={46} icon={<EnterIcon />} lines={['Enter', 'data']} />
            <RibbonButton w={76} icon={<DataverseIcon />} lines={['Dataverse']} />
            <RibbonButton w={62} icon={<RecentIcon />} lines={['Recent', 'sources']} chevron />
          </GroupBody>
          <GroupLabel>Data</GroupLabel>
        </Group>
        <Group $w={145}>
          <GroupBody $pad={14}>
            <RibbonButton w={64} icon={<TransformIcon />} lines={['Transform', 'data']} chevron />
            <RibbonButton w={62} icon={<RefreshIcon />} lines={['Refresh']} />
          </GroupBody>
          <GroupLabel>Queries</GroupLabel>
        </Group>
        <Group $w={186}>
          <GroupBody $pad={13}>
            <RibbonButton w={48} icon={<NewVisualIcon />} lines={['New', 'visual']} />
            <RibbonButton w={52} icon={<TextBoxIcon />} lines={['Text', 'box']} />
            <RibbonButton w={60} icon={<MoreVisualsIcon />} lines={['More', 'visuals']} chevron />
          </GroupBody>
          <GroupLabel>Insert</GroupLabel>
        </Group>
        <Group $w={236}>
          <GroupBody $pad={11}>
            <RibbonButton w={84} off icon={<VisualCalcIcon />} lines={['New visual', 'calculation']} chevron />
            <RibbonButton w={76} icon={<MeasureIcon />} lines={['New', 'measure']} />
            <RibbonButton w={48} icon={<QuickIcon />} lines={['Quick', 'measure']} />
          </GroupBody>
          <GroupLabel>Calculations</GroupLabel>
        </Group>
        <Group $w={92}>
          <GroupBody $pad={9}>
            <RibbonButton w={70} off icon={<SensitivityIcon />} lines={['Sensitivity', '']} chevron />
          </GroupBody>
          <GroupLabel>Sensitivity</GroupLabel>
        </Group>
        <Group $w={75}>
          <GroupBody>
            <RibbonButton w={74} icon={<PublishIcon />} lines={['Publish']} />
          </GroupBody>
          <GroupLabel>Share</GroupLabel>
        </Group>
        <Group $w={74}>
          <GroupBody>
            <RibbonButton w={73} icon={<CopilotIcon />} lines={['Copilot']} />
          </GroupBody>
          <GroupLabel>Copilot</GroupLabel>
        </Group>
        <Collapse><ChevronUp size={16} strokeWidth={3} /></Collapse>
      </RibbonBar>

      <Workspace>
        <LeftNav>
          <svg width="24" height="24" viewBox="0 0 24 24" fill="none" stroke="#444" strokeWidth="1.3">
            <path d="M3 2v19h18" /><rect x="6" y="6" width="3.5" height="12" /><rect x="11" y="10" width="3.5" height="8" /><rect x="16" y="3" width="3.5" height="15" />
          </svg>
          <Gal><Grid x={2} y={2} w={20} h={20} cols={3} rows={4} s="#777" /></Gal>
          <Gal>
            <g stroke="#777" strokeWidth="1.2" fill="none">
              <rect x="1" y="7" width="9" height="11" /><rect x="13" y="1" width="10" height="10" /><rect x="13" y="13" width="10" height="10" />
              <path d="M1 12h9M13 6h10M13 18h10M10 9h3M10 15h3" />
            </g>
          </Gal>
          <Gal>
            <path d="M6 15V1h9l5 5v14c0 1-1 3-3 3" stroke="#777" fill="none" />
            <path d="M15 1v5h5" stroke="#777" fill="none" />
            <text x="0" y="21" fontSize="8" fontWeight="700" fill="#777" fontFamily="Open Sans, sans-serif">DAX</text>
          </Gal>
        </LeftNav>

        <Center>
          <UpperRow>
            <CanvasArea>
              <Canvas>
                {/* white backing frames behind the KPI cards */}
                <Visual $x={169} $y={222} $w={204} $h={112} $bg="#fff" />
                <Visual $x={169} $y={334} $w={210} $h={114} $bg="#fff" />
                <Visual $x={169} $y={449} $w={405} $h={113} $bg="#fff" />
                <Visual $x={379} $y={222} $w={142} $h={132} $bg={MINT} />

                <Visual $x={182} $y={167} $w={90} $h={45} $bg="transparent">
                  <svg width="90" height="45" viewBox="0 0 90 45">
                    <defs>
                      <linearGradient id="sapBlue" x1="0" y1="0" x2="0" y2="1">
                        <stop offset="0" stopColor="#00a9ec" />
                        <stop offset="1" stopColor="#0a5aad" />
                      </linearGradient>
                    </defs>
                    <path d="M0 0h90L47 45H0z" fill="url(#sapBlue)" />
                    <text x="1" y="35" fontSize="34" fontWeight="700" letterSpacing="-2.5" fill="#fff" fontFamily="Liberation Sans, sans-serif">SAP</text>
                  </svg>
                </Visual>

                <Visual $x={174} $y={227} $w={194} $h={103}><CardLabel>PM Counter</CardLabel></Visual>
                <Visual $x={174} $y={339} $w={199} $h={103}><CardLabel>Planned Cost</CardLabel></Visual>
                <Visual $x={174} $y={454} $w={190} $h={102} $bg={TEAL}><CardLabel>Actual Cost</CardLabel></Visual>
                <Visual $x={374} $y={454} $w={195} $h={102}><CardLabel>PM Completed</CardLabel></Visual>
                <Visual $x={381} $y={227} $w={134} $h={55} $bg="#3b3b3b">
                  <MiniTitle>Canceled</MiniTitle>
                  <MiniValue>402</MiniValue>
                </Visual>
                <Visual $x={381} $y={287} $w={134} $h={55} $bg="#3b3b3b">
                  <MiniTitle>Not Executed</MiniTitle>
                  <MiniValue>5215</MiniValue>
                </Visual>

                <Visual $x={540} $y={168} $w={502} $h={67} $shadow>
                  <Headline $size={33} $spacing={-0.65} $top={9}>Maintenance Dashboard 2024</Headline>
                </Visual>
                <Visual $x={1202} $y={175} $w={295} $h={60} $shadow>
                  <Headline $size={15.7} $top={7}>Maintenance Planning Department</Headline>
                </Visual>
                <Visual $x={574} $y={249} $w={434} $h={59} $bg={TEAL} $shadow>
                  <Headline $size={29.5} $weight={600} $top={5}>PREVENTIVE MAINTENANCE</Headline>
                </Visual>

                <Visual $x={588} $y={322} $w={324} $h={301}>
                  <ChartTitle $pad={6} $spacing={0.7}>Canceled WO Counter</ChartTitle>
                  <ChartSvg width="324" height="271" viewBox="588 352 324 271">
                    {donut.map(([a0, a1, c]) => (
                      <path key={a0} d={arcPath(a0, a1, 750, 485, 107, 64)} fill={c} />
                    ))}
                  </ChartSvg>
                </Visual>

                <Visual $x={920} $y={322} $w={578} $h={300}>
                  <ChartTitle $pad={6} $size={23} $spacing={0.85} $line={28}>Not Excuted WO Counter</ChartTitle>
                  <ChartSvg width="578" height="270" viewBox="920 352 578 270">
                    {[[800, 414], [600, 462], [400, 511], [200, 560], [0, 609]].map(([v, y]) => (
                      <g key={v}>
                        <line x1="954" x2="1490" y1={y} y2={y} stroke="#cdd8d8" strokeDasharray="1 4" />
                        <text x="945" y={y + 3.5} fontSize="10" fontWeight="600" fill="#d4dcdc" textAnchor="end">{v}</text>
                      </g>
                    ))}
                    {notExecuted.map((h, i) => (
                      <rect key={i} x={969 + i * 36.8} y={609 - h} width="29" height={h} fill={MINT} />
                    ))}
                  </ChartSvg>
                </Visual>

                <Visual $x={587} $y={635} $w={913} $h={269} $bg={MINT} $color="#1f3a4d">
                  <ChartTitle $pad={6} $size={23} $spacing={0.78} $line={30}>WO Counter and Completion Percentage</ChartTitle>
                  <ChartSvg width="913" height="239" viewBox="587 665 913 239">
                    {[['8.0K', 678], ['6.0K', 728], ['4.0K', 778], ['2.0K', 828], ['0.0K', 878]].map(([v, y]) => (
                      <g key={v}>
                        <line x1="625" x2="1488" y1={y} y2={y} stroke="#d2d8d2" strokeDasharray="4 4" />
                        <text x="593" y={y + 3.5} fontSize="10" fill="#777">{v}</text>
                      </g>
                    ))}
                    {completed.map((h, i) => (
                      <rect key={i} x={649 + i * 59.4} y={878 - h} width="46" height={h} fill={TEAL} />
                    ))}
                    <polyline
                      fill="none"
                      stroke={DARK}
                      strokeWidth="3"
                      points={percentLine.map((y, i) => `${672 + i * 59.4},${630 + y / 3}`).join(' ')}
                    />
                  </ChartSvg>
                </Visual>

                <Visual $x={177} $y={562} $w={397} $h={346} $bg={TEAL} $color={MINT}>
                  <ChartTitle $pad={6} $spacing={0.6} $line={28}>WO Counter by Month</ChartTitle>
                  <MonthList>
                    {months.map(([name, width]) => (
                      <MonthRow key={name}>
                        <MonthName>{name}</MonthName>
                        <MonthBar style={{ width }} />
                      </MonthRow>
                    ))}
                  </MonthList>
                </Visual>
              </Canvas>
            </CanvasArea>
            <FilterStrip>
              <ChevronsLeft size={22} strokeWidth={1.5} />
              <svg width="16" height="16" viewBox="0 0 20 20" fill="none" stroke="#333" strokeWidth="1.5" style={{ marginTop: 16 }}>
                <path d="M1 9l17-7v15z" />
              </svg>
              <VerticalText $top={10}>Filters</VerticalText>
            </FilterStrip>
          </UpperRow>
          <TabsBar>
            <ViewIcons>
              <ViewSlot $active>
                <svg width="26" height="24" viewBox="0 0 26 24" fill="none" stroke="#777" strokeWidth="1.4">
                  <rect x="2" y="2" width="22" height="15" fill="#f5f5f5" /><path d="M13 17v4M8 21h10" />
                </svg>
              </ViewSlot>
              <ViewSlot $left={24}>
                <svg width="18" height="26" viewBox="0 0 18 26" fill="none" stroke="#777" strokeWidth="1.6">
                  <rect x="2" y="1" width="14" height="24" rx="2" /><path d="M9 20v1" />
                </svg>
              </ViewSlot>
              <NavArrows width="36" height="14" viewBox="0 0 36 14" fill="#cfcfcf">
                <path d="M6 1v12L0 7zM29 1v12l6-6z" />
              </NavArrows>
            </ViewIcons>
            <PageTab $w={58} $active>1<CloseX>x</CloseX></PageTab>
            {tabNumbers.map(([n, w]) => (
              <PageTab key={n} $w={w}>{n}</PageTab>
            ))}
            <AddTab>+</AddTab>
          </TabsBar>
        </Center>

        <VizPane>
          <VizHeader>Visualizations<ChevronsRight size={22} strokeWidth={1.5} /></VizHeader>
          <BuildLabel>Build visual</BuildLabel>
          <BuildTabs>
            <BuildTab $active $gap={41}>
              <svg width="32" height="32" viewBox="0 0 32 32">
                <path d="M2 3h24" stroke="#333" />
                <rect x="2" y="7" width="28" height="9" fill={GREEN} stroke="#333" strokeDasharray="1.5 1.5" />
                <rect x="2" y="19" width="28" height="9" fill={GREEN} stroke="#333" strokeDasharray="1.5 1.5" />
              </svg>
            </BuildTab>
            <BuildTab>
              <svg width="32" height="32" viewBox="0 0 32 32" fill="none" stroke="#444" strokeWidth="1.2">
                <path d="M6 30H2V1h16l7 8v4 M18 1v8h7" />
                <path d="M16 24L30 10l2 2-13 14z" />
                <path d="M15 23c-3 1-3 6-8 7 5 2 11 1 12-4z" />
              </svg>
            </BuildTab>
          </BuildTabs>
          <Notch width="227" height="15" viewBox="0 0 227 15" fill="none">
            <path d="M0 14.5H20L30 5l10 9.5H227" stroke="#b0b0b0" />
          </Notch>
          <Gallery>
            {galleryIcons.map((icon, i) => (
              <Gal key={i}>{icon}</Gal>
            ))}
            <More>...</More>
          </Gallery>
          <Divider />
          <FieldLabel $top={11}>Values</FieldLabel>
          <DropBox $top={8} $h={34} $pad={13}>Add data fields here</DropBox>
          <FieldLabel $top={16} $weight={600} $color="#444">Drill through</FieldLabel>
          <ToggleRow $top={10}>
            Cross-report
            <Toggle>Off</Toggle>
          </ToggleRow>
          <ToggleRow $top={11}>
            Keep all filters
            <Toggle $on>On</Toggle>
          </ToggleRow>
          <DropBox $top={11} $h={31} $pad={10}>Add drill-through fields here</DropBox>
        </VizPane>

        <DataStrip>
          <ChevronsLeft size={22} strokeWidth={1.5} />
          <VerticalText $top={16}>Data</VerticalText>
        </DataStrip>
      </Workspace>

      <Watermark>
        <WatermarkArabic>مستقل</WatermarkArabic>
        <WatermarkLatin>mostaql.com</WatermarkLatin>
      </Watermark>
    </Page>
  );
};

export default App;
